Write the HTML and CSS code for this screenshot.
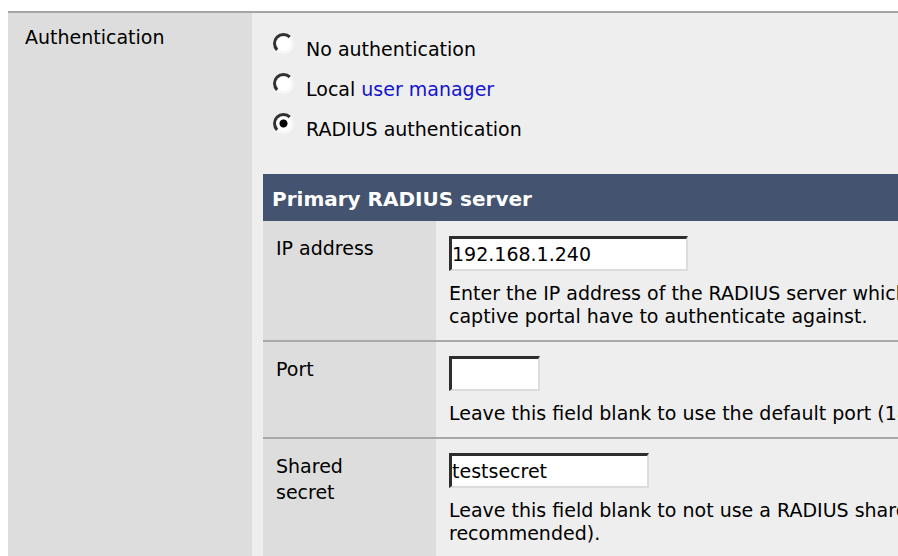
FILE: index.html
```html
<!DOCTYPE html>
<html lang="en">
<head>
<meta charset="utf-8">
<title>Captive portal: Authentication</title>
<link rel="stylesheet" href="styles.css">
</head>
<body>
<div class="settings">
  <div class="cell-label">Authentication</div>
  <div class="cell-field">
    <div class="choices">
      <label class="choice"><input class="radio" type="radio" name="auth_method" value="none"><span class="choice-text">No authentication</span></label>
      <label class="choice"><input class="radio" type="radio" name="auth_method" value="local"><span class="choice-text">Local <a href="#">user manager</a></span></label>
      <label class="choice"><input class="radio" type="radio" name="auth_method" value="radius" checked><span class="choice-text">RADIUS authentication</span></label>
    </div>

    <div class="subtable">
      <div class="subtable-head">Primary RADIUS server</div>

      <div class="subrow">
        <div class="sublabel">IP address</div>
        <div class="subfield">
          <input class="text-input ip" type="text" name="radiusip" value="192.168.1.240">
          <div class="hint">Enter the IP address of the RADIUS server which users of the captive portal have to authenticate against.</div>
        </div>
      </div>

      <div class="subrow">
        <div class="sublabel">Port</div>
        <div class="subfield">
          <input class="text-input port" type="text" name="radiusport" value="">
          <div class="hint">Leave this field blank to use the default port (1812).</div>
        </div>
      </div>

      <div class="subrow">
        <div class="sublabel">Shared secret</div>
        <div class="subfield">
          <input class="text-input secret" type="text" name="radiuskey" value="testsecret">
          <div class="hint">Leave this field blank to not use a RADIUS shared secret (not recommended).</div>
        </div>
      </div>
    </div>
  </div>
</div>
</body>
</html>
```

FILE: styles.css
```css
html,
body {
  margin: 0;
  background: #fff;
  overflow: hidden;
}

body {
  padding: 11px 0 0 8px;
  font-family: "DejaVu Sans", Verdana, sans-serif;
  font-size: 19px;
  line-height: 23px;
  color: #000;
}

a {
  color: #1414cc;
  text-decoration: none;
}

/* outer settings row: label column + field column */
.settings {
  width: 1084px;
  min-height: 600px;
  display: grid;
  grid-template-columns: 244px 1fr;
  border-top: 2px solid #a4a4a4;
}

.cell-label {
  background: #ddd;
  padding: 13px 17px;
}

.cell-field {
  background: #eee;
  padding: 20px 10px 0 11px;
}

/* authentication method choices */
.choices {
  padding-left: 10px;
}

.choice {
  display: flex;
  align-items: flex-start;
  height: 40px;
}

.choice-text {
  margin-left: 12px;
  padding-top: 5px;
}

.radio {
  appearance: none;
  -webkit-appearance: none;
  flex: none;
  box-sizing: border-box;
  width: 21px;
  height: 21px;
  margin: 0;
  border-radius: 50%;
  border: 3px solid;
  border-color: #303030 #f7f7f7 #f7f7f7 #303030;
  background: #fff;
}

.radio:checked {
  background: radial-gradient(circle, #000 0 3.5px, #fff 4.5px);
}

/* nested server settings */
.subtable {
  margin-top: 21px;
}

.subtable-head {
  background: #435370;
  color: #fff;
  font-weight: bold;
  font-size: 20px;
  padding: 14px 9px 10px;
}

.subrow {
  display: grid;
  grid-template-columns: 173px 1fr;
}

.subrow + .subrow {
  border-top: 2px solid #a8a8a8;
}

.sublabel {
  background: #ddd;
  line-height: 26px;
  padding: 14px 40px 12px 13px;
}

.subfield {
  background: #eee;
  padding: 15px 13px 12px;
}

.subrow + .subrow > .subfield {
  padding-top: 14px;
}

.subrow + .subrow > .sublabel {
  padding-top: 14px;
}

.text-input {
  display: block;
  box-sizing: border-box;
  height: 35px;
  margin: 0 0 11px;
  padding: 0;
  border-style: solid;
  border-width: 3px 2px 2px 3px;
  border-color: #2e2e2e #dcdcdc #dcdcdc #2e2e2e;
  border-radius: 0;
  background: #fff;
  font: inherit;
  line-height: normal;
  color: #000;
  outline: none;
}

.ip {
  width: 239px;
}

.port {
  width: 91px;
}

.secret {
  width: 200px;
}
```
